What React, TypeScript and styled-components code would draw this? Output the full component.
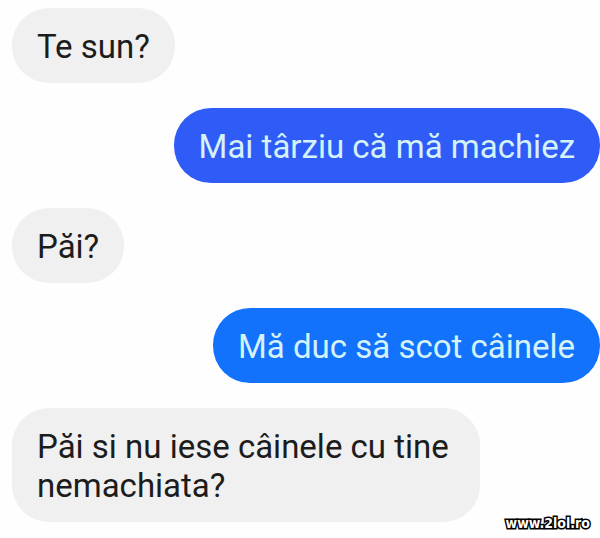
import React from "react";
import styled, { createGlobalStyle } from "styled-components";

const GlobalStyle = createGlobalStyle`
  * { box-sizing: border-box; }
  body { margin: 0; background: #fefefe; font-family: Roboto, "Liberation Sans", sans-serif; }
`;

const Conversation = styled.main`
  position: relative;
  display: flex;
  flex-direction: column;
  gap: 25px;
  min-height: 100vh;
  padding: 8px 0 16px 12px;
`;

const Bubble = styled.p<{ $sent?: boolean; $color?: string }>`
  align-self: ${(p) => (p.$sent ? "flex-end" : "flex-start")};
  max-width: 468px;
  margin: 0;
  padding: 19px 25px 17px;
  border-radius: 37px;
  background: ${(p) => p.$color ?? "#f0f0f0"};
  color: ${(p) => (p.$sent ? "#d4f2f8" : "#1c1c1c")};
  font-size: 33px;
  line-height: 39px;
`;

const Watermark = styled.a`
  position: absolute;
  right: 10px;
  bottom: 6px;
  color: #fff;
  font: bold 14px/18px "DejaVu Sans Condensed", "DejaVu Sans", sans-serif;
  text-decoration: none;
  -webkit-text-stroke: 3px #000;
  paint-order: stroke fill;
`;

export default function App() {
  return (
    <>
      <GlobalStyle />
      <Conversation>
        <Bubble>Te sun?</Bubble>
        <Bubble $sent $color="#2f5cf6">Mai târziu că mă machiez</Bubble>
        <Bubble>Păi?</Bubble>
        <Bubble $sent $color="#1272fc">Mă duc să scot câinele</Bubble>
        <Bubble>Păi si nu iese câinele cu tine nemachiata?</Bubble>
        <Watermark href="#">www.2lol.ro</Watermark>
      </Conversation>
    </>
  );
}
